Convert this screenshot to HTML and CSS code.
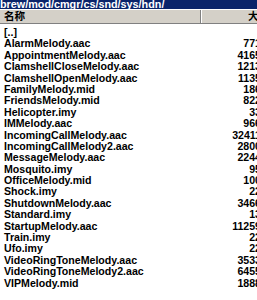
FILE: index.html
```html
<!DOCTYPE html>
<html>
<head lang="zh">
    <meta charset="UTF-8">
    <title>hdn</title>
    <link rel="stylesheet" href="styles.css">
</head>
<body>
<div id="window">
    <div class="titlebar"><span>brew/mod/cmgr/cs/snd/sys/hdn/</span></div>
    <div class="header">
        <div class="col-name">名称</div>
        <div class="col-size">大小</div>
    </div>
    <ul class="list">
        <li><span class="name">[..]</span><span class="size"></span></li>
        <li><span class="name">AlarmMelody.aac</span><span class="size">771</span></li>
        <li><span class="name">AppointmentMelody.aac</span><span class="size">4165</span></li>
        <li><span class="name">ClamshellCloseMelody.aac</span><span class="size">1213</span></li>
        <li><span class="name">ClamshellOpenMelody.aac</span><span class="size">1135</span></li>
        <li><span class="name">FamilyMelody.mid</span><span class="size">186</span></li>
        <li><span class="name">FriendsMelody.mid</span><span class="size">822</span></li>
        <li><span class="name">Helicopter.imy</span><span class="size">33</span></li>
        <li><span class="name">IMMelody.aac</span><span class="size">966</span></li>
        <li><span class="name">IncomingCallMelody.aac</span><span class="size">32411</span></li>
        <li><span class="name">IncomingCallMelody2.aac</span><span class="size">2800</span></li>
        <li><span class="name">MessageMelody.aac</span><span class="size">2244</span></li>
        <li><span class="name">Mosquito.imy</span><span class="size">95</span></li>
        <li><span class="name">OfficeMelody.mid</span><span class="size">100</span></li>
        <li><span class="name">Shock.imy</span><span class="size">22</span></li>
        <li><span class="name">ShutdownMelody.aac</span><span class="size">3466</span></li>
        <li><span class="name">Standard.imy</span><span class="size">13</span></li>
        <li><span class="name">StartupMelody.aac</span><span class="size">11259</span></li>
        <li><span class="name">Train.imy</span><span class="size">22</span></li>
        <li><span class="name">Ufo.imy</span><span class="size">22</span></li>
        <li><span class="name">VideoRingToneMelody.aac</span><span class="size">3533</span></li>
        <li><span class="name">VideoRingToneMelody2.aac</span><span class="size">6455</span></li>
        <li><span class="name">VIPMelody.mid</span><span class="size">1888</span></li>
    </ul>
</div>
</body>
</html>
```
FILE: styles.css
```css
*{
    margin:0;
    padding:0;
}
body{
    width:257px;
    height:300px;
    overflow:hidden;
    background:#fff;
}
ul{
    list-style:none;
}
#window{
    width:263px;
    font-family:Tahoma,"Liberation Sans","Noto Sans CJK SC",sans-serif;
    font-size:10.6px;
    font-weight:bold;
    color:#000;
}
.titlebar{
    height:9px;
    background:#0a246a;
    color:#fff;
    overflow:hidden;
    display:flex;
    align-items:flex-end;
}
.titlebar span{
    font-size:10.8px;
    line-height:11px;
    margin-bottom:-1px;
}
.header{
    display:flex;
    height:13px;
    background:#d4d0c8;
    border-top:1px solid #fff;
    border-bottom:1px solid #808080;
    line-height:13px;
}
.col-name{
    width:196px;
    padding-left:4px;
    border-right:1px solid #808080;
    box-shadow:1px 0 0 #fff;
}
.col-size{
    flex:1;
    padding-left:47px;
    white-space:nowrap;
    overflow:hidden;
}
.list{
    padding-top:3px;
}
.list li{
    display:flex;
    height:11.4px;
    line-height:11.4px;
    padding-left:4px;
}
.name{
    flex:1;
}
.size{
    padding-right:2px;
}
```
